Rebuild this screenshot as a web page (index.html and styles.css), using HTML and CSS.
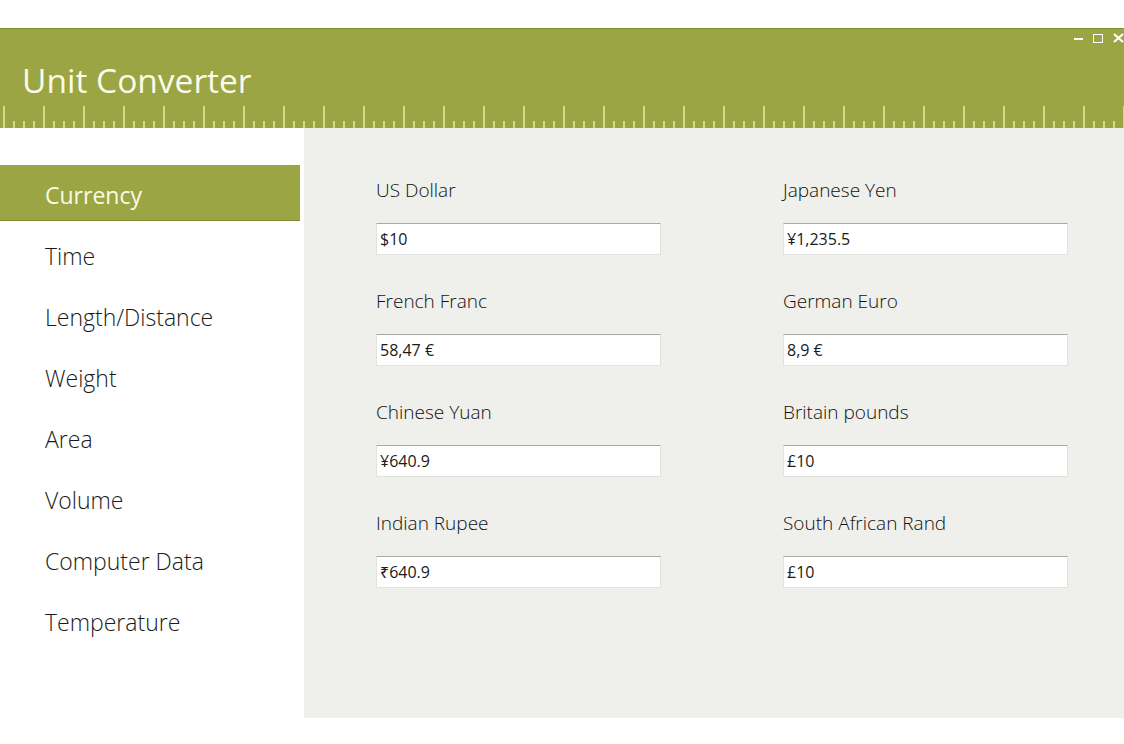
FILE: index.html
```html
<!DOCTYPE html>
<html>
<head>
<meta charset="utf-8">
<link rel="stylesheet" href="styles.css">
</head>
<body>
<div class="window">
  <header class="header">
    <h1 class="title">Unit Converter</h1>
    <div class="controls">
      <span class="ctl-min"></span>
      <span class="ctl-max"></span>
      <svg class="ctl-close" width="11" height="10" viewBox="0 0 11 10"><path d="M1 1 L10 9 M10 1 L1 9" stroke="#fff" stroke-width="2.2" fill="none"/></svg>
    </div>
    <div class="ruler"></div>
  </header>
  <div class="main">
    <nav class="sidebar">
      <div class="nav-item active">Currency</div>
      <div class="nav-item">Time</div>
      <div class="nav-item">Length/Distance</div>
      <div class="nav-item">Weight</div>
      <div class="nav-item">Area</div>
      <div class="nav-item">Volume</div>
      <div class="nav-item">Computer Data</div>
      <div class="nav-item">Temperature</div>
    </nav>
    <section class="content">
      <div class="field"><div class="label">US Dollar</div><div class="input">$10</div></div>
      <div class="field"><div class="label">Japanese Yen</div><div class="input">¥1,235.5</div></div>
      <div class="field"><div class="label">French Franc</div><div class="input">58,47 €</div></div>
      <div class="field"><div class="label">German Euro</div><div class="input">8,9 €</div></div>
      <div class="field"><div class="label">Chinese Yuan</div><div class="input">¥640.9</div></div>
      <div class="field"><div class="label">Britain pounds</div><div class="input">£10</div></div>
      <div class="field"><div class="label">Indian Rupee</div><div class="input">₹640.9</div></div>
      <div class="field"><div class="label">South African Rand</div><div class="input">£10</div></div>
    </section>
  </div>
</div>
</body>
</html>
```

FILE: styles.css
```css
* { box-sizing: border-box; }
html, body { margin: 0; padding: 0; background: #ffffff; }
body { font-family: "Open Sans", "Noto Sans", "Liberation Sans", sans-serif; color: #222; }

.window { margin-top: 28px; width: 1124px; height: 690px; display: flex; flex-direction: column; }

.header { position: relative; height: 100px; background: #9ba543; border-top: 1px solid #84902f; display: flex; flex-direction: column; justify-content: flex-end; }
.title { margin: 0; padding-left: 22px; font-size: 33.5px; font-weight: 400; color: #fafbe9; line-height: 40px; margin-bottom: 6px; }
.ruler { height: 22px; background:
  linear-gradient(to right, #d3da88 0 2px, transparent 2px) 3px 0 / 40px 22px repeat-x,
  linear-gradient(to right, #d3da88 0 2px, transparent 2px) 3px 15px / 10px 7px repeat-x; }

.controls { position: absolute; top: 4px; right: 0; display: flex; align-items: center; gap: 10px; }
.ctl-min { width: 9px; height: 2px; background: #fff; margin-top: 2px; }
.ctl-max { width: 10px; height: 9px; border: 1.5px solid #fff; }
.ctl-close { display: block; }

.main { flex: 1; display: flex; }
.sidebar { width: 304px; background: #fff; padding-top: 37px; display: flex; flex-direction: column; gap: 5px; }
.nav-item { height: 56px; width: 300px; padding-left: 45px; padding-top: 4px; display: flex; align-items: center; font-size: 23px; font-weight: 300; color: #1a1a1a; }
.nav-item.active { background: #9ba543; color: #fafbe6; border-bottom: 1px solid #7f8b2c; font-weight: 400; }

.content { flex: 1; background: #efefeb; padding: 49px 0 0 72px; display: grid; grid-template-columns: 285px 285px; column-gap: 122px; grid-auto-rows: 111px; align-content: start; }
.label { font-size: 19px; line-height: 26px; font-weight: 300; color: #111; }
.input { margin-top: 20px; height: 32px; background: #fff; border: 1px solid #e2e2de; border-top-color: #a9a9a9; padding-left: 3px; font-size: 16px; line-height: 30px; font-weight: 400; color: #1a1a1a; }
```
